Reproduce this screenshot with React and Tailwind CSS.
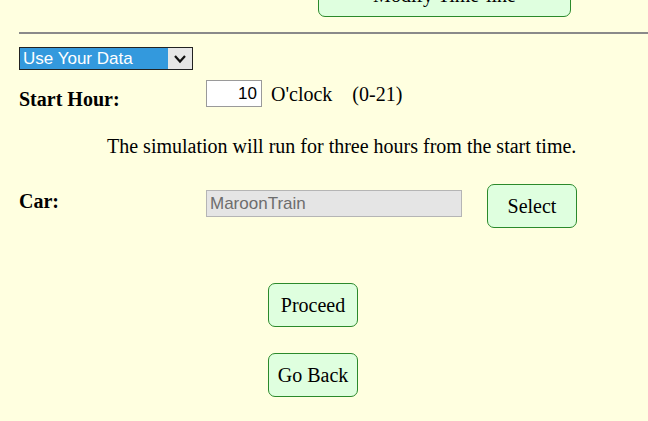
import React, { useState } from 'react';

const serif = { fontFamily: '"Liberation Serif", "Times New Roman", serif' };
const sans = { fontFamily: '"Liberation Sans", Arial, sans-serif' };

const GreenButton = ({ children, className = '' }) => (
  <button
    className={`h-[44px] rounded-[7px] border border-[#2b8a2b] bg-[#dfffdf] text-[20px] leading-[24px] text-black ${className}`}
    style={serif}
  >
    {children}
  </button>
);

const App = () => {
  const [hour, setHour] = useState('10');

  return (
    <div className="h-[421px] w-[648px] overflow-hidden bg-[#ffffe0] text-black" style={serif}>
      {/* bouton coupé en haut */}
      <div className="mt-[-27px] flex pl-[318px]">
        <GreenButton className="w-[253px]">Modify Time-line</GreenButton>
      </div>

      <hr className="ml-[19px] mt-[15px] border-t-2 border-[#8a8a8a]" />

      <div className="ml-[19px] mt-[13px] flex h-[23px] w-[174px] items-stretch border border-[#222] bg-white" style={sans}>
        <div className="flex flex-1 items-center bg-[#3399dd] pl-[3px] text-[17px] leading-none text-white">Use Your Data</div>
        <div className="flex w-[24px] items-center justify-center bg-[#e6e6e6]">
          <svg width="14" height="10" viewBox="0 0 14 10">
            <path d="M2 2 L7 7.5 L12 2" fill="none" stroke="#111" strokeWidth="2.2" />
          </svg>
        </div>
      </div>

      <div className="mt-[10px] flex h-[27px] items-center">
        <div className="mt-[10px] w-[206px] pl-[19px] text-[20px] font-bold leading-[24px]">Start Hour:</div>
        <input
          value={hour}
          onChange={e => setHour(e.target.value)}
          className="h-[27px] w-[56px] border border-[#9a9a9a] bg-white pr-[4px] text-right text-[17px] outline-none"
          style={sans}
        />
        <span className="ml-[9px] text-[20px] leading-[24px]">O'clock</span>
        <span className="ml-[20px] text-[20px] leading-[24px]">(0-21)</span>
      </div>

      <p className="mt-[27px] pl-[107px] text-[20px] leading-[24px]">The simulation will run for three hours from the start time.</p>

      <div className="mt-[26px] flex items-start">
        <div className="mt-[5px] w-[206px] pl-[19px] text-[20px] font-bold leading-[24px]">Car:</div>
        <input
          value="MaroonTrain"
          disabled
          readOnly
          className="mt-[6px] h-[27px] w-[256px] border border-[#b5b5b5] bg-[#e5e5e5] pl-[3px] text-[17px] text-[#6d6d6d]"
          style={sans}
        />
        <GreenButton className="ml-[25px] w-[90px]">Select</GreenButton>
      </div>

      <div className="mt-[55px] flex flex-col gap-[26px] pl-[268px]">
        <GreenButton className="w-[90px]">Proceed</GreenButton>
        <GreenButton className="w-[90px]">Go Back</GreenButton>
      </div>
    </div>
  );
};

export default App;
